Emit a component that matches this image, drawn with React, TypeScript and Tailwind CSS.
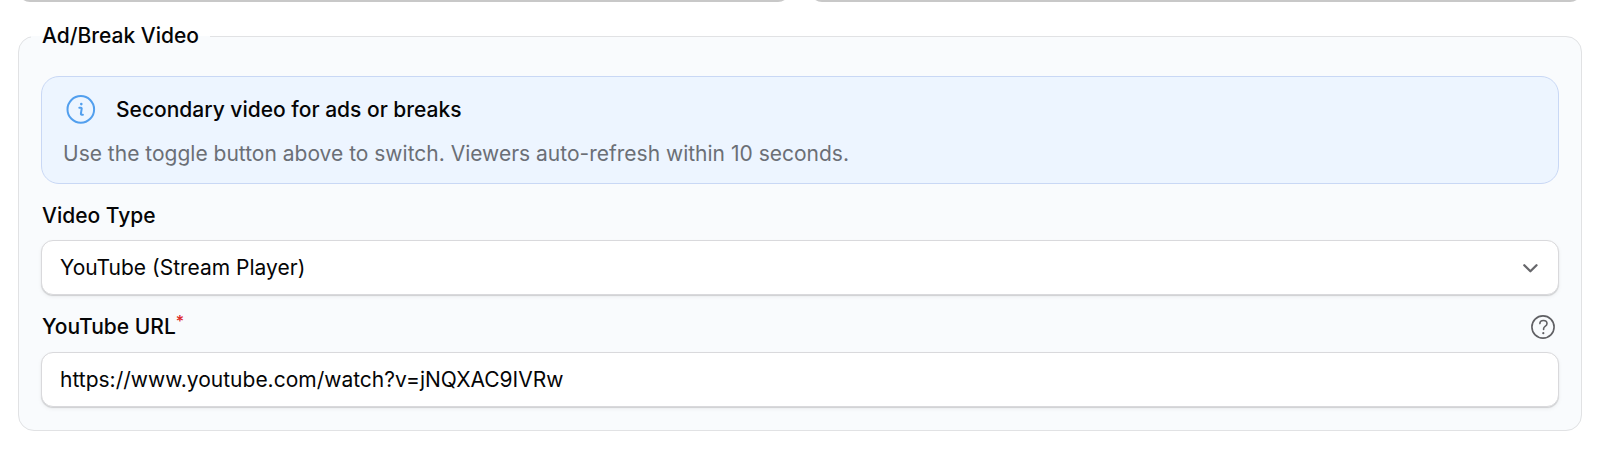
import React, { useState } from 'react';

const fieldClass =
  "block h-[55px] w-full rounded-xl border border-[#d9d9dc] bg-white px-[18px] text-[21px] text-[#050506] shadow-[0_1px_1px_rgba(0,0,0,0.14),0_2px_4px_rgba(0,0,0,0.05)] outline-none";

const InfoIcon: React.FC = () => (
  <svg className="h-8 w-9 shrink-0 text-[#529fee]" viewBox="0 0 36 32" fill="none" stroke="currentColor" aria-hidden="true">
    <circle cx="17.8" cy="15.4" r="13.3" strokeWidth="2" />
    <path d="M16.3 13.8h1.7c.5 0 .8.4.7.9l-.8 5c-.1.6.2 1 .8 1h1.2" strokeWidth="2" strokeLinecap="round" strokeLinejoin="round" />
    <circle cx="18.3" cy="10.1" r="1.3" fill="currentColor" stroke="none" />
  </svg>
);

const HelpIcon: React.FC = () => (
  <svg className="size-6" viewBox="0 0 24 24" fill="none" stroke="currentColor" aria-hidden="true">
    <circle cx="12" cy="12" r="11.1" strokeWidth="1.6" />
    <path d="M8.9 8.6c0-1.8 1.5-3.1 3.5-3.1s3.6 1.3 3.6 3c0 1.4-.8 2.2-1.9 2.9-1.1.8-1.5 1.3-1.5 2.4v.7" strokeWidth="1.6" strokeLinecap="round" strokeLinejoin="round" />
    <circle cx="12.3" cy="18.2" r="1.1" fill="currentColor" stroke="none" />
  </svg>
);

const ChevronIcon: React.FC = () => (
  <svg className="pointer-events-none absolute right-4 top-4 size-6 text-[#67676b]" viewBox="0 0 24 24" fill="none" stroke="currentColor" aria-hidden="true">
    <path d="M5.3 9.2l6.1 6.1 6.1-6.1" strokeWidth="2.3" strokeLinecap="round" strokeLinejoin="round" />
  </svg>
);

const InfoCallout: React.FC = () => (
  <div className="rounded-[18px] border border-[#c9d8f5] bg-[#edf5ff] px-[21px] pt-[17px] pb-[15px]">
    <div className="flex items-center gap-[17px]">
      <InfoIcon />
      <h3 className="font-medium leading-7">Secondary video for ads or breaks</h3>
    </div>
    <p className="mt-3.5 leading-7 text-[#6b6f76]">
      Use the toggle button above to switch. Viewers auto-refresh within 10 seconds.
    </p>
  </div>
);

const App: React.FC = () => {
  const [videoType, setVideoType] = useState('youtube');
  const [url, setUrl] = useState('https://www.youtube.com/watch?v=jNQXAC9IVRw');

  return (
    <main className="bg-white px-[18px] pb-[18px] font-['Inter',sans-serif] text-[21px] text-[#050506]">
      <div className="flex h-0.5 items-end gap-5 overflow-hidden">
        <div className="h-14 flex-1 rounded-xl border-b-2 border-[#c8c8c8]" />
        <div className="h-14 flex-1 rounded-xl border-b-2 border-[#c8c8c8]" />
      </div>

      <fieldset className="mt-5 rounded-2xl border border-[#e1e2e4] bg-[#f9fbfd]">
        <legend className="ml-3 px-[11px] font-medium leading-7">Ad/Break Video</legend>

        <div className="px-[22px] pt-[26px] pb-[23px]">
          <InfoCallout />

          <div className="mt-[18px]">
            <label htmlFor="video-type" className="ml-px block font-medium leading-7">
              Video Type
            </label>
            <div className="relative mt-2.5">
              <select
                id="video-type"
                value={videoType}
                onChange={(e) => setVideoType(e.target.value)}
                className={`${fieldClass} appearance-none`}
              >
                <option value="youtube">YouTube (Stream Player)</option>
              </select>
              <ChevronIcon />
            </div>
          </div>

          <div className="mt-[18px]">
            <div className="flex items-center justify-between pl-px pr-1">
              <label htmlFor="youtube-url" className="flex items-start font-medium leading-7">
                YouTube URL<span className="text-base leading-4 text-[#dc2626]">*</span>
              </label>
              <button type="button" aria-label="Help" className="text-[#606064]">
                <HelpIcon />
              </button>
            </div>
            <input
              id="youtube-url"
              type="text"
              required
              value={url}
              onChange={(e) => setUrl(e.target.value)}
              className={`${fieldClass} mt-[11px]`}
            />
          </div>
        </div>
      </fieldset>
    </main>
  );
};

export default App;
